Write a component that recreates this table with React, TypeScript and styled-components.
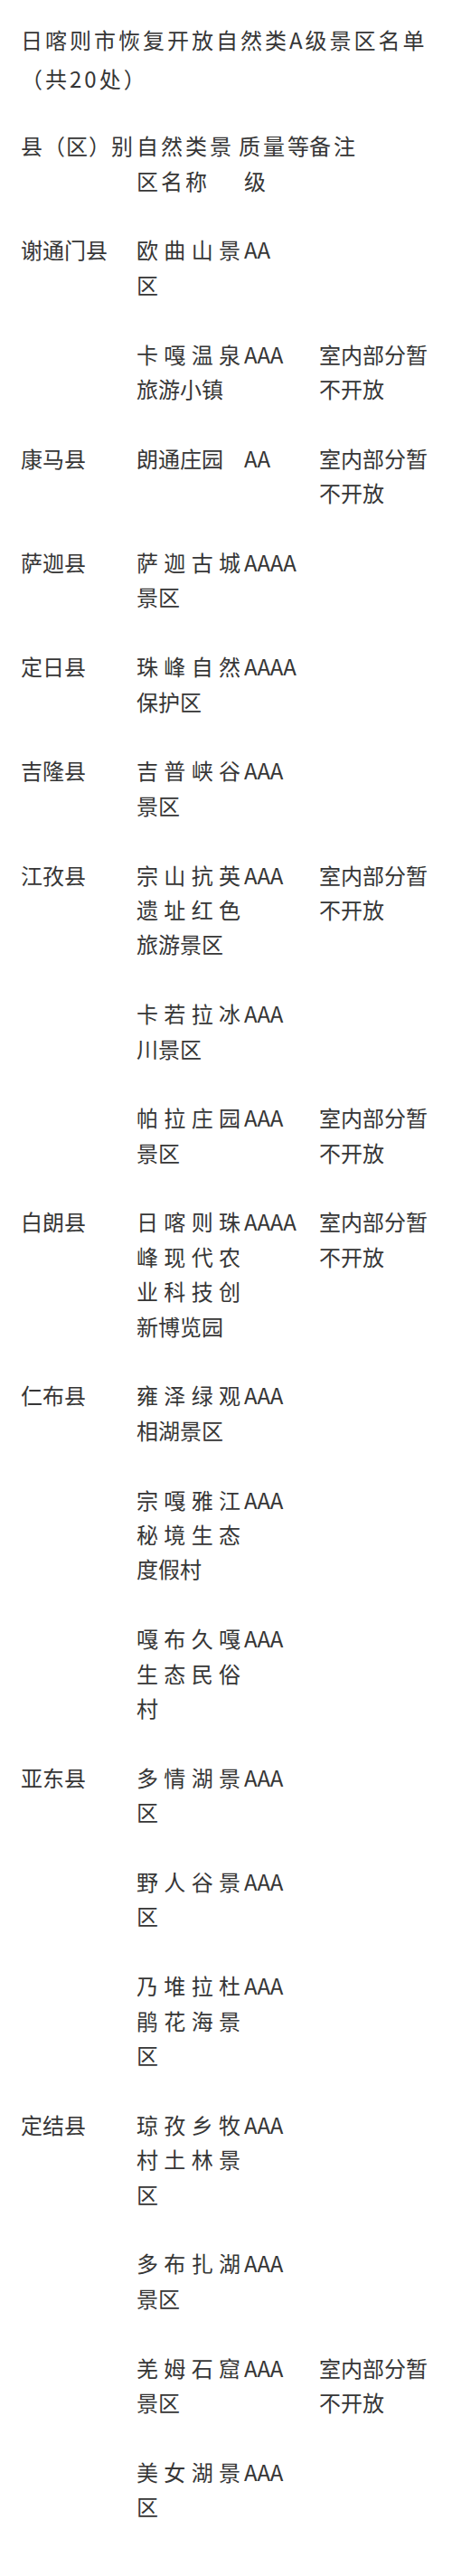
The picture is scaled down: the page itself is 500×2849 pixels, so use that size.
import styled, { createGlobalStyle } from 'styled-components';

interface ISpot {
  county: string;
  name: string;
  grade: string;
  note: string;
}

const CLOSED = '室内部分暂不开放';

const spots: ISpot[] = [
  { county: '谢通门县', name: '欧曲山景区', grade: 'AA', note: '' },
  { county: '', name: '卡嘎温泉旅游小镇', grade: 'AAA', note: CLOSED },
  { county: '康马县', name: '朗通庄园', grade: 'AA', note: CLOSED },
  { county: '萨迦县', name: '萨迦古城景区', grade: 'AAAA', note: '' },
  { county: '定日县', name: '珠峰自然保护区', grade: 'AAAA', note: '' },
  { county: '吉隆县', name: '吉普峡谷景区', grade: 'AAA', note: '' },
  { county: '江孜县', name: '宗山抗英遗址红色旅游景区', grade: 'AAA', note: CLOSED },
  { county: '', name: '卡若拉冰川景区', grade: 'AAA', note: '' },
  { county: '', name: '帕拉庄园景区', grade: 'AAA', note: CLOSED },
  { county: '白朗县', name: '日喀则珠峰现代农业科技创新博览园', grade: 'AAAA', note: CLOSED },
  { county: '仁布县', name: '雍泽绿观相湖景区', grade: 'AAA', note: '' },
  { county: '', name: '宗嘎雅江秘境生态度假村', grade: 'AAA', note: '' },
  { county: '', name: '嘎布久嘎生态民俗村', grade: 'AAA', note: '' },
  { county: '亚东县', name: '多情湖景区', grade: 'AAA', note: '' },
  { county: '', name: '野人谷景区', grade: 'AAA', note: '' },
  { county: '', name: '乃堆拉杜鹃花海景区', grade: 'AAA', note: '' },
  { county: '定结县', name: '琼孜乡牧村土林景区', grade: 'AAA', note: '' },
  { county: '', name: '多布扎湖景区', grade: 'AAA', note: '' },
  { county: '', name: '羌姆石窟景区', grade: 'AAA', note: CLOSED },
  { county: '', name: '美女湖景区', grade: 'AAA', note: '' },
];

const GlobalStyle = createGlobalStyle`
  body {
    margin: 0;
    background: #fff;
    font-family: "Noto Sans CJK SC", "Noto Sans", sans-serif;
    color: #363636;
  }
`;

const Page = styled.div`
  padding: 22px 23px 34px;
`;

const Title = styled.h1`
  margin: 0;
  font-size: 24px;
  font-weight: 400;
  line-height: 43px;
  letter-spacing: 3px;
`;

const Table = styled.table`
  width: 100%;
  margin-top: 15px;
  table-layout: fixed;
  border-collapse: collapse;
`;

const Col = styled.col<{ $w: number }>`
  width: ${p => p.$w}px;
`;

const Cell = styled.td`
  padding: 19.2px 0;
  vertical-align: top;
  font-size: 24px;
  line-height: 38.4px;
  text-align: left;
`;

// scenic spot names are justified across the column, like the source
const NameCell = styled(Cell)`
  padding-right: 4px;
  text-align: justify;
`;

// header first line runs on as one string in the source, so pull it left a bit
const HeadCell = styled.th<{ $spacing: number; $indent?: number }>`
  padding: 19.2px 0;
  vertical-align: top;
  font-size: 24px;
  font-weight: 400;
  line-height: 38.4px;
  text-align: left;
  letter-spacing: ${p => p.$spacing}px;
  text-indent: ${p => p.$indent || 0}px;
`;

const App = () => {
  return (
    <Page>
      <GlobalStyle />
      <Title>
        日喀则市恢复开放自然类A级景区名单
        <br />
        （共20处）
      </Title>
      <Table>
        <colgroup>
          <Col $w={128} />
          <Col $w={119} />
          <Col $w={83} />
          <Col $w={124} />
        </colgroup>
        <thead>
          <tr>
            <HeadCell $spacing={1}>县（区）别</HeadCell>
            <HeadCell $spacing={3}>自然类景区名称</HeadCell>
            <HeadCell $spacing={3} $indent={-6}>
              质量等级
            </HeadCell>
            <HeadCell $spacing={3} $indent={-11}>
              备注
            </HeadCell>
          </tr>
        </thead>
        <tbody>
          {spots.map((s, i) => (
            <tr key={i}>
              <Cell>{s.county}</Cell>
              <NameCell>{s.name}</NameCell>
              <Cell>{s.grade}</Cell>
              <Cell>{s.note}</Cell>
            </tr>
          ))}
        </tbody>
      </Table>
    </Page>
  );
};

export default App;
